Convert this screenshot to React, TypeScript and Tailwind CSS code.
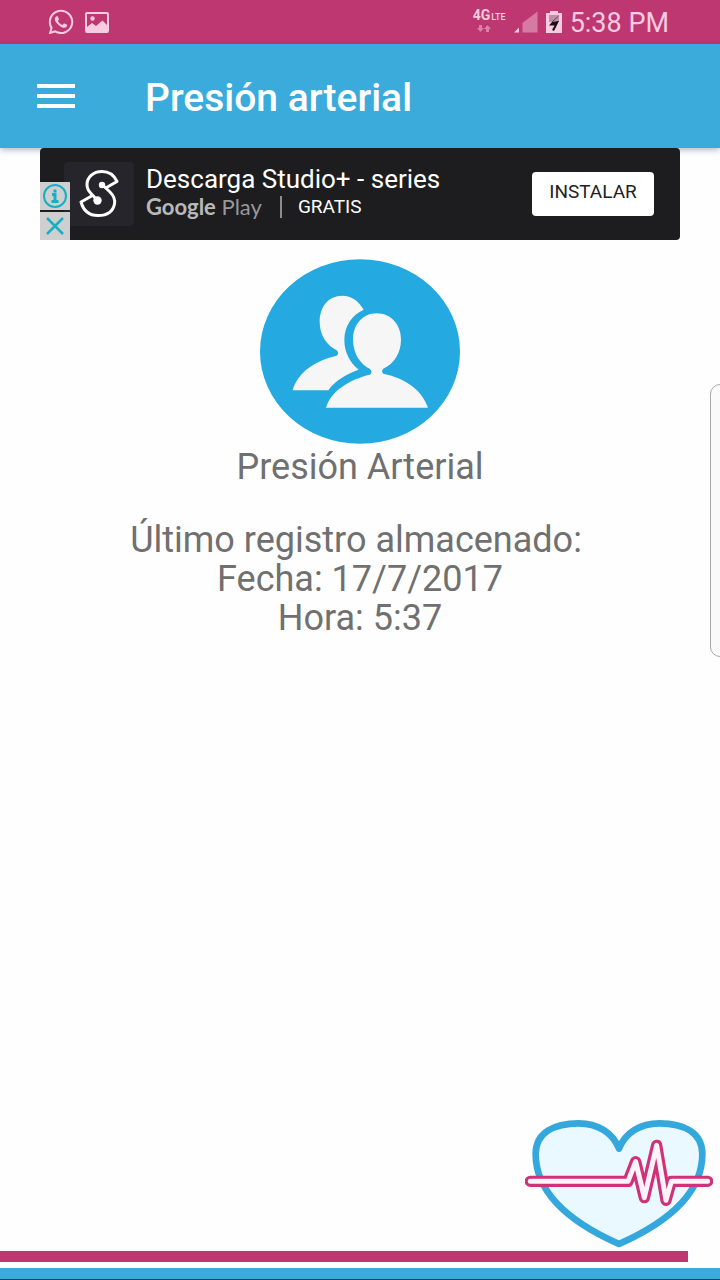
import type { ReactNode } from "react";
import { FaWhatsapp } from "react-icons/fa";

const FONT = "font-[Roboto,'Liberation_Sans',sans-serif]";

function StatusBar() {
  return (
    <div className="flex h-11 items-center justify-between bg-[#be3771] pr-[51px] pl-[47px] text-[#f7cbe0]">
      <div className="flex items-center gap-2.5">
        <FaWhatsapp aria-hidden className="size-7" />
        <svg aria-hidden viewBox="0 0 24 21" className="h-[21px] w-6">
          <rect x="1" y="1" width="22" height="19" rx="1" fill="none" stroke="currentColor" strokeWidth="2" />
          <circle cx="7.5" cy="6.5" r="2.2" fill="currentColor" />
          <path d="M2 15l5-4 4 3 6.500-5.500L22 13v7H2z" fill="currentColor" />
        </svg>
      </div>
      <div className="flex items-center">
        <div className="flex h-[30px] flex-col">
          <p className="flex items-baseline gap-px leading-4">
            <span className="text-sm leading-4 font-bold">4G</span>
            <span className="text-[9px] leading-4 font-medium">LTE</span>
          </p>
          <svg aria-hidden viewBox="0 0 14 7" className="ml-1 h-[7px] w-3.5 opacity-50" fill="currentColor">
            <path d="M2 0h3v3h2L3.500 7 0 3h2zM9 7h3V4h2l-3.500-4L7 4h2z" />
          </svg>
        </div>
        <svg aria-hidden viewBox="0 0 24 22" className="ml-2 h-[22px] w-6" fill="currentColor">
          <path d="M0 21.500L5 16.500v5z" />
          <path d="M8.500 21.500V12L23.500.5v21z" opacity=".45" />
        </svg>
        <svg aria-hidden viewBox="0 0 16 22" className="ml-2 h-[22px] w-4">
          <path d="M4 2V0h8v2h4v20H0V2z" fill="currentColor" />
          <path d="M3 4h10v7H3z" fill="#bd8fa7" />
          <path d="M13 10L8 20l-2-1 2.500-4.500H3L6 11z" fill="#1d1019" />
          <path d="M12.500 5L6 11" stroke="#6d4457" />
        </svg>
        <time className="ml-2 pt-0.5 text-[27px] leading-8">5:38 PM</time>
      </div>
    </div>
  );
}

function AppBar() {
  return (
    <header className="relative flex h-[104px] items-center bg-[#3aabdb] pt-1 pl-[37px] shadow-[0_2px_6px_rgba(40,50,110,0.35)]">
      <button type="button" aria-label="Menú" className="flex w-[38px] flex-col gap-1.5 pb-1">
        <span className="h-1 w-full bg-white" />
        <span className="h-1 w-full bg-white" />
        <span className="h-1 w-full bg-white" />
      </button>
      <h1 className="ml-[70px] text-[39px] leading-10 font-medium text-white">Presión arterial</h1>
    </header>
  );
}

function AdBadge({ label, children }: { label: string; children: ReactNode }) {
  return (
    <button type="button" aria-label={label} className="flex h-7 w-[30px] items-center justify-center bg-[#cfcfcf]">
      <svg aria-hidden viewBox="0 0 24 24" className="size-6" fill="none" stroke="#18aec4" strokeWidth="2">
        {children}
      </svg>
    </button>
  );
}

function AdBanner() {
  return (
    <aside className="relative mx-10 flex h-[92px] items-center rounded-sm bg-[#1d1d1f] pr-[26px] pl-6">
      <svg aria-hidden viewBox="0 0 70 64" className="h-16 w-[70px] shrink-0">
        <rect width="70" height="64" rx="4" fill="#25252b" />
        <g fill="none" stroke="#fff" strokeWidth="3" strokeLinejoin="round">
          <path d="M42.500 25.500L53 19.500C50 13 44.500 9.500 38 9.500C29 9.500 23 15.500 23 22.500C23 26.500 24.500 29 27 31.500L33.500 38.500" />
          <path d="M38 22.500L46 30C49.500 33.500 51.500 37 50.500 42C49 49.500 43 53.500 34 53.500C26 53.500 19.500 49 17 40L28.500 33.500" />
        </g>
        <circle cx="38" cy="23" r="3.200" fill="#fff" />
        <circle cx="33.500" cy="38.500" r="4.200" fill="#fff" />
      </svg>
      <div className="ml-3 flex-1 pb-0.5">
        <p className="text-[26px] leading-7 text-white">Descarga Studio+ - series</p>
        <p className="flex items-center leading-7 text-white">
          <span className="font-[Lato,Roboto,sans-serif] text-[22px] text-[#b9b9bb]">
            <span className="font-bold">Google</span> <span className="text-[#98989b]">Play</span>
          </span>
          <span aria-hidden className="ml-[18px] h-[22px] w-0.5 bg-[#8c8c8e]" />
          <span className="ml-4 text-[19px] leading-7">GRATIS</span>
        </p>
      </div>
      <a
        href="#instalar"
        className="flex h-11 w-[122px] items-center justify-center rounded-sm bg-white pb-1 text-[19px] text-[#222]"
      >
        INSTALAR
      </a>
      <div className="absolute bottom-0 left-0 flex flex-col gap-0.5">
        <AdBadge label="Información del anuncio">
          <circle cx="12" cy="12" r="11" />
          <path d="M12 5.500v3M9 10.500h3V17M8.500 17.500h7" strokeWidth="3" />
        </AdBadge>
        <AdBadge label="Cerrar anuncio">
          <path d="M4 4l16 16M20 4L4 20" strokeWidth="2.500" />
        </AdBadge>
      </div>
    </aside>
  );
}

function PeopleIcon() {
  return (
    <svg aria-hidden viewBox="0 0 600 554" className="h-[185px] w-[200px]">
      <ellipse cx="300" cy="277" rx="300" ry="277" fill="#24aae1" />
      <g fill="#f6f6f6">
        <path d="M311 152C296 126 275 110 247 110C205 110 179 144 179 188C179 232 203 260 230 273Q239 282 230 290C170 304 116 335 98 393H205C225 366 258 345 296 332C268 308 253 279 253 242C253 201 277 167 311 152Z" />
        <path d="M350 162C309 162 279 195 279 241C279 286 303 316 329 329Q339 338 331 346C266 362 213 396 198 446H504C486 394 438 358 370 344Q362 336 371 328C401 314 423 283 423 241C423 195 392 162 350 162Z" />
      </g>
    </svg>
  );
}

function HeartLogo() {
  const pulse = "M61 245H354L377 186L403 294L440 137L468 302L484 245H593";
  return (
    <svg aria-hidden viewBox="45 55 564 390" className="mr-[7px] h-[130px] w-[188px] self-end">
      <path
        d="M327 147C308 98 262 71 206 71C133 71 77 98 77 163C77 282 185 370 327 433C469 370 577 282 577 163C577 98 521 71 448 71C392 71 346 98 327 147Z"
        fill="#eaf8ff"
        stroke="#34a8dc"
        strokeWidth="20"
        strokeLinejoin="round"
      />
      <g fill="none" strokeLinecap="round" strokeLinejoin="round">
        <path d={pulse} stroke="#cf3279" strokeWidth="34" />
        <path d={pulse} stroke="#fff3fa" strokeWidth="15" />
      </g>
    </svg>
  );
}

export default function App() {
  return (
    <div className={`relative flex min-h-screen flex-col overflow-hidden bg-[#fefefe] ${FONT}`}>
      <StatusBar />
      <AppBar />
      <AdBanner />
      <main className="flex flex-1 flex-col items-center pt-[19px] text-center text-[36px] leading-[39px] text-[#707070]">
        <PeopleIcon />
        <h2 className="mt-1">Presión Arterial</h2>
        <p className="mt-[34px] pr-2">Último registro almacenado:</p>
        <p>Fecha: 17/7/2017</p>
        <p>Hora: 5:37</p>
      </main>
      <footer className="flex flex-col">
        <HeartLogo />
        <div className="mt-[3px] mr-8 h-[11px] bg-[#be3771]" />
        <div className="mt-1.5 h-3 border-b border-[#153b55] bg-[#3aabdb]" />
      </footer>
      {/* Edge panel handle */}
      <div
        aria-hidden
        className="absolute top-[384px] -right-2.5 h-[273px] w-5 rounded-xl border border-[#aaa] bg-[#fafafa]"
      />
    </div>
  );
}
